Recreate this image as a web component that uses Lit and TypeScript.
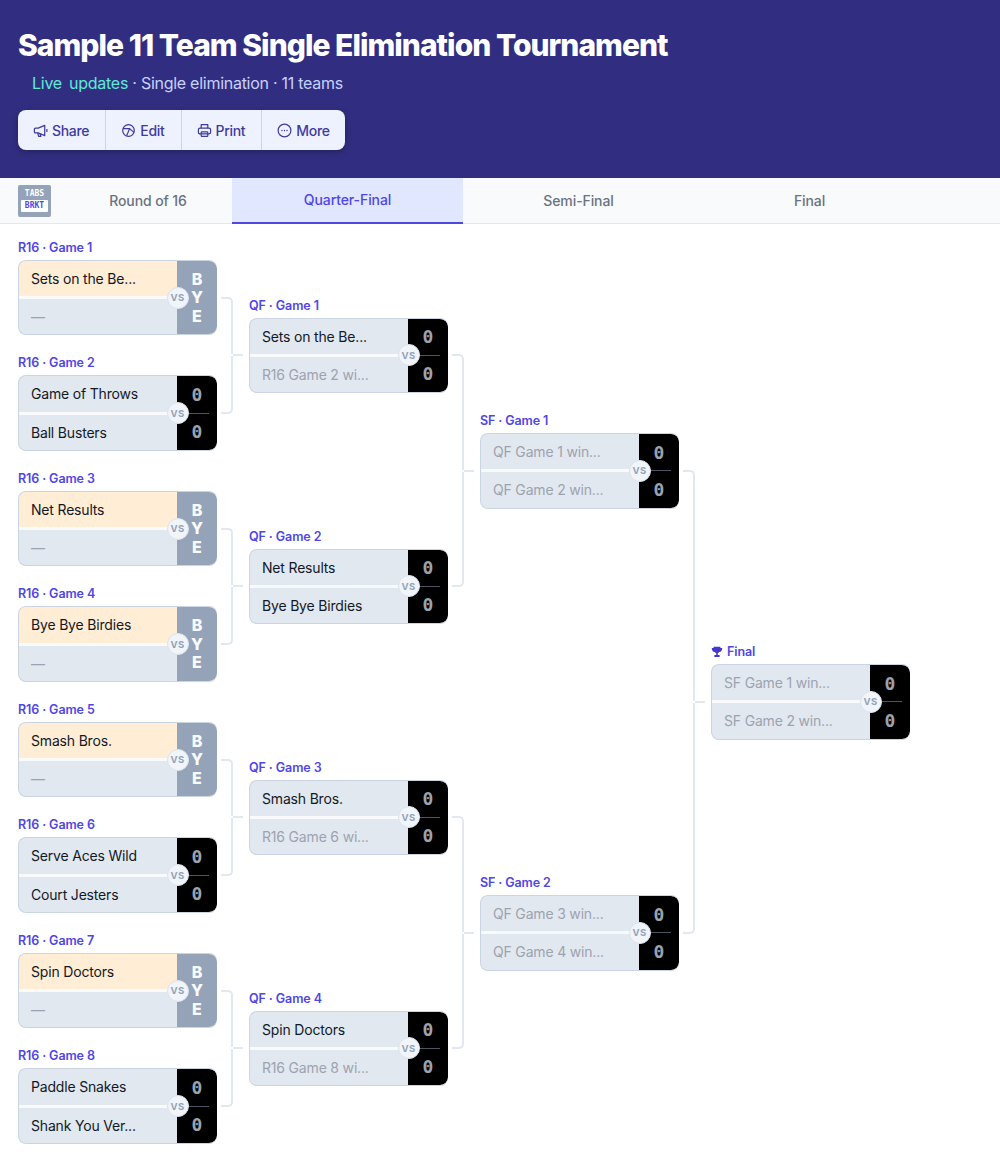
import { LitElement, html, css, svg } from "lit";
import { customElement, property } from "lit/decorators.js";
import { classMap } from "lit/directives/class-map.js";

type Team = { name: string; tbd?: boolean; lead?: boolean };
type Game = { label: string; top: Team; bottom: Team; bye?: boolean; trophy?: boolean };

const team = (name: string): Team => ({ name });
const tbd = (name: string): Team => ({ name, tbd: true });
const byeGame = (label: string, name: string): Game => ({
  label,
  top: { name, lead: true },
  bottom: tbd("—"),
  bye: true,
});

const ROUNDS: Game[][] = [
  [
    byeGame("R16 · Game 1", "Sets on the Be..."),
    { label: "R16 · Game 2", top: team("Game of Throws"), bottom: team("Ball Busters") },
    byeGame("R16 · Game 3", "Net Results"),
    byeGame("R16 · Game 4", "Bye Bye Birdies"),
    byeGame("R16 · Game 5", "Smash Bros."),
    { label: "R16 · Game 6", top: team("Serve Aces Wild"), bottom: team("Court Jesters") },
    byeGame("R16 · Game 7", "Spin Doctors"),
    { label: "R16 · Game 8", top: team("Paddle Snakes"), bottom: team("Shank You Ver...") },
  ],
  [
    { label: "QF · Game 1", top: team("Sets on the Be..."), bottom: tbd("R16 Game 2 wi...") },
    { label: "QF · Game 2", top: team("Net Results"), bottom: team("Bye Bye Birdies") },
    { label: "QF · Game 3", top: team("Smash Bros."), bottom: tbd("R16 Game 6 wi...") },
    { label: "QF · Game 4", top: team("Spin Doctors"), bottom: tbd("R16 Game 8 wi...") },
  ],
  [
    { label: "SF · Game 1", top: tbd("QF Game 1 win..."), bottom: tbd("QF Game 2 win...") },
    { label: "SF · Game 2", top: tbd("QF Game 3 win..."), bottom: tbd("QF Game 4 win...") },
  ],
  [{ label: "Final", top: tbd("SF Game 1 win..."), bottom: tbd("SF Game 2 win..."), trophy: true }],
];

const icons = {
  share: svg`<path d="M12.500 2.500 5.500 5.500H2.500a1 1 0 0 0-1 1v3a1 1 0 0 0 1 1h3l7 3z"/><path d="M5 10.500 6 14.200h2.400l-1-3"/><path d="M14.800 6.500v3"/>`,
  edit: svg`<circle cx="8" cy="8" r="6.200"/><path d="M2.200 6h7L6 13.500"/><path d="M9.200 6l4.600 4"/>`,
  print: svg`<path d="M4.500 5.500V1.800h7v3.700"/><rect x="1.500" y="5.500" width="13" height="6.200" rx="1.800"/><rect x="4.500" y="9.500" width="7" height="4.800" rx=".6"/>`,
  more: svg`<circle cx="8" cy="8" r="6.800"/><path d="M5.300 8h.01M8 8h.01M10.700 8h.01" stroke-width="1.500" stroke-linecap="round"/>`,
};

@customElement("bracket-match")
class BracketMatch extends LitElement {
  static styles = css`
    :host {
      display: block;
    }
    .label {
      display: flex;
      align-items: center;
      gap: 4px;
      height: 20px;
      margin-bottom: 2px;
      font-size: 12.500px;
      line-height: 20px;
      font-weight: 600;
      letter-spacing: -0.1px;
      color: #4f46e5;
    }
    .label svg {
      width: 12px;
      height: 12px;
      fill: #4338ca;
    }
    .card {
      position: relative;
      display: flex;
      height: 75.500px;
      box-sizing: border-box;
      border-radius: 8px;
      overflow: hidden;
      border: 1px solid #cbd5e1;
      border-right: 0;
      background: #e2e8f0;
    }
    .teams {
      flex: 1;
      min-width: 0;
      display: flex;
      flex-direction: column;
    }
    .row {
      flex: 1;
      display: flex;
      align-items: center;
      padding-left: 12px;
      font-size: 14px;
      letter-spacing: -0.180px;
      color: #111827;
      white-space: nowrap;
    }
    .row + .row {
      border-top: 3px solid #f8fafc;
    }
    .row.lead {
      background: #ffedd5;
    }
    .row.tbd {
      color: #9ca3af;
    }
    .scores {
      width: 40px;
      flex: none;
      background: #000;
      border-radius: 0 8px 8px 0;
      display: flex;
      flex-direction: column;
      align-items: center;
      justify-content: center;
      font-family: "DejaVu Sans Mono", "Liberation Mono", monospace;
      font-size: 18px;
      font-weight: 700;
      color: #9ca3af;
    }
    .scores span {
      flex: 1;
      display: flex;
      align-items: center;
    }
    .scores i {
      display: block;
      width: 100%;
      height: 1px;
      background: linear-gradient(to right, #4b5563 80%, #000 80%);
    }
    .bye {
      width: 40px;
      flex: none;
      background: #94a3b8;
      border-radius: 0 8px 8px 0;
      display: flex;
      flex-direction: column;
      align-items: center;
      justify-content: center;
      font-size: 16px;
      line-height: 18.500px;
      font-weight: 800;
      color: #f8fafc;
    }
    .vs {
      position: absolute;
      right: 28.500px;
      top: 50%;
      width: 22px;
      height: 22px;
      margin-top: -11px;
      box-sizing: border-box;
      border-radius: 50%;
      border: 1px solid #dbe3ee;
      background: #f1f5f9;
      display: flex;
      align-items: center;
      justify-content: center;
      font-size: 9.500px;
      font-weight: 700;
      letter-spacing: 0.3px;
      color: #94a3b8;
    }
  `;

  @property({ attribute: false }) game!: Game;

  renderRow(t: Team) {
    return html`<div class=${classMap({ row: true, lead: !!t.lead, tbd: !!t.tbd })}>${t.name}</div>`;
  }

  render() {
    const g = this.game;
    return html`
      <div class="label">
        ${g.trophy
          ? html`<svg viewBox="0 0 16 16">
              <path d="M3.500 1h9v1.500H15c0 3-1.200 5-4 5.500-.5.800-1.200 1.300-2 1.500V12h2.500v2.500h-7V12H7V9.500c-.800-.200-1.500-.700-2-1.500C2.200 7.500 1 5.500 1 2.500h2.500z"/>
            </svg>`
          : null}
        ${g.label}
      </div>
      <div class="card">
        <div class="teams">${this.renderRow(g.top)} ${this.renderRow(g.bottom)}</div>
        ${g.bye
          ? html`<div class="bye"><div>B</div><div>Y</div><div>E</div></div>`
          : html`<div class="scores"><span>0</span><i></i><span>0</span></div>`}
        <div class="vs">VS</div>
      </div>
    `;
  }
}

@customElement("app-root")
export class AppRoot extends LitElement {
  static styles = css`
    :host {
      display: block;
      font-family: Inter, "Liberation Sans", sans-serif;
      background: #fff;
    }
    header {
      height: 178px;
      box-sizing: border-box;
      padding: 26px 18px 0;
      background: #312e81;
    }
    h1 {
      margin: 0;
      font-size: 30px;
      line-height: 38px;
      font-weight: 800;
      letter-spacing: -0.970px;
      color: #fff;
    }
    .sub {
      margin-top: 9px;
      padding-left: 14px;
      font-size: 16px;
      line-height: 20px;
      letter-spacing: -0.270px;
      color: #c7d2fe;
    }
    .live {
      color: #5eead4;
      word-spacing: 3px;
    }
    .actions {
      display: inline-flex;
      height: 40px;
      margin-top: 17px;
      border-radius: 8px;
      background: #eef2ff;
      box-shadow: 0 2px 6px rgba(0, 0, 0, 0.25);
    }
    .actions button {
      display: flex;
      align-items: center;
      gap: 4px;
      padding: 0 16px 0 15px;
      border: 0;
      border-right: 1px solid #c7d2fe;
      background: none;
      font: 500 14px Inter, "Liberation Sans", sans-serif;
      letter-spacing: -0.3px;
      color: #3f3a9e;
    }
    .actions button:last-child {
      padding-right: 15px;
      border-right: 0;
    }
    .actions svg {
      width: 15px;
      height: 15px;
      fill: none;
      stroke: currentColor;
      stroke-width: 1.300;
      stroke-linejoin: round;
    }
    nav {
      display: grid;
      grid-template-columns: 64px 168px 231px 231px 231px;
      height: 46px;
      box-sizing: border-box;
      background: #f8fafc;
      border-bottom: 1px solid #e2e8f0;
    }
    .logo {
      align-self: start;
      width: 33px;
      height: 32px;
      margin: 7px 0 0 18px;
      box-sizing: border-box;
      padding: 3px;
      background: #94a3b8;
      border-radius: 2px;
      font-family: "DejaVu Sans Mono", monospace;
      font-size: 8px;
      font-weight: 700;
      line-height: 11px;
      text-align: center;
      color: #fff;
    }
    .logo b {
      display: block;
      margin-top: 1px;
      height: 12px;
      line-height: 12px;
      background: #fff;
      border-radius: 1px;
      color: #4f46e5;
    }
    .tab {
      display: flex;
      align-items: center;
      justify-content: center;
      padding-bottom: 2px;
      font-size: 14px;
      font-weight: 500;
      letter-spacing: -0.1px;
      color: #6b7280;
    }
    .tab.active {
      height: 46px;
      box-sizing: border-box;
      background: #e0e7ff;
      color: #4f46e5;
      border-bottom: 2px solid #4f46e5;
    }
    .bracket {
      display: flex;
      gap: 32px;
      height: 924px;
      padding: 4.800px 18px 12px;
    }
    .round {
      width: 199px;
      display: flex;
      flex-direction: column;
    }
    .slot {
      position: relative;
      flex: 1;
      display: flex;
      flex-direction: column;
      justify-content: center;
    }
    .link {
      position: absolute;
      left: calc(100% + 4px);
      width: 12px;
      height: 50%;
      box-sizing: border-box;
      border: 0 solid #e2e8f0;
      border-right-width: 2px;
    }
    .link.down {
      top: calc(50% + 10px);
      border-top-width: 2px;
      border-top-right-radius: 5px;
    }
    .link.up {
      top: 12px;
      border-bottom-width: 2px;
      border-bottom-right-radius: 5px;
    }
    .stub {
      position: absolute;
      left: -16px;
      top: calc(50% + 10px);
      width: 10px;
      height: 2px;
      background: #e2e8f0;
    }
  `;

  renderSlot(game: Game, i: number, round: number) {
    const last = round === ROUNDS.length - 1;
    return html`
      <div class="slot">
        ${round > 0 ? html`<div class="stub"></div>` : null}
        <bracket-match .game=${game}></bracket-match>
        ${last ? null : html`<div class="link ${i % 2 ? "up" : "down"}"></div>`}
      </div>
    `;
  }

  render() {
    return html`
      <header>
        <h1>Sample 11 Team Single Elimination Tournament</h1>
        <div class="sub"><span class="live">Live updates</span> · Single elimination · 11 teams</div>
        <div class="actions">
          <button><svg viewBox="0 0 16 16">${icons.share}</svg>Share</button>
          <button><svg viewBox="0 0 16 16">${icons.edit}</svg>Edit</button>
          <button><svg viewBox="0 0 16 16">${icons.print}</svg>Print</button>
          <button><svg viewBox="0 0 16 16">${icons.more}</svg>More</button>
        </div>
      </header>
      <nav>
        <div class="logo">TABS<b>BRKT</b></div>
        <div class="tab">Round of 16</div>
        <div class="tab active">Quarter-Final</div>
        <div class="tab">Semi-Final</div>
        <div class="tab">Final</div>
      </nav>
      <div class="bracket">
        ${ROUNDS.map(
          (games, r) => html`<div class="round">${games.map((g, i) => this.renderSlot(g, i, r))}</div>`
        )}
      </div>
    `;
  }
}
